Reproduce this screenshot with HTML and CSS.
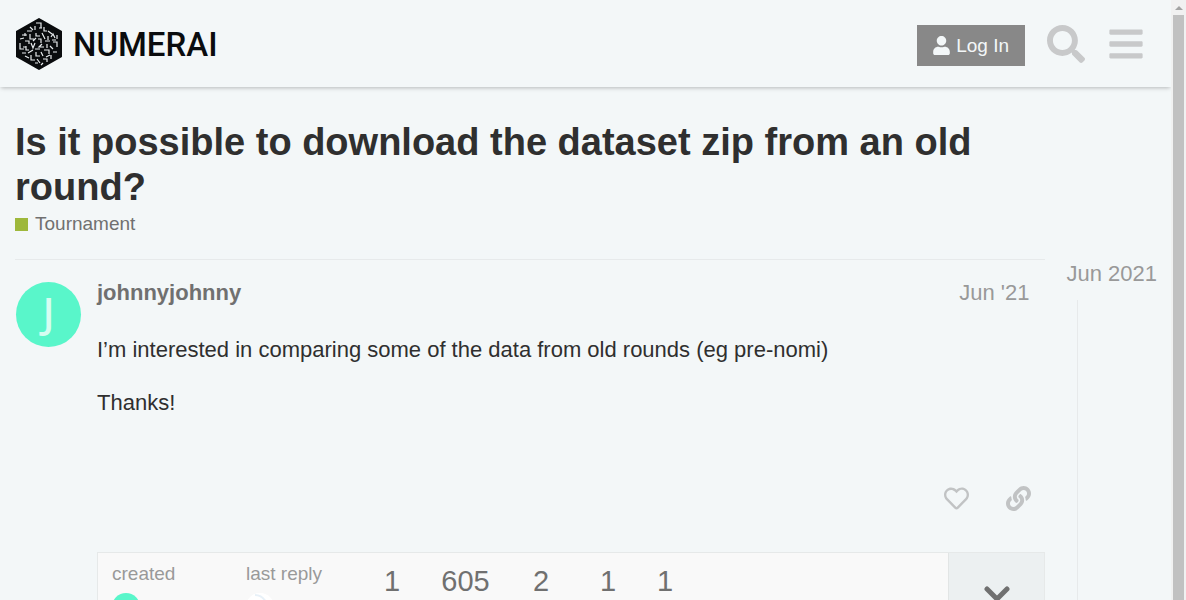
FILE: index.html
```html
<!DOCTYPE html>
<html lang="en">
<head>
<meta charset="utf-8">
<meta name="viewport" content="width=device-width, initial-scale=1">
<title>Is it possible to download the dataset zip from an old round?</title>
<link rel="stylesheet" href="styles.css">
</head>
<body>
<div class="window">
<div class="page">
  <header class="site-header">
    <a class="logo" href="#">
      <svg class="logo-mark" viewBox="0 0 46 52" aria-hidden="true">
        <path d="M23 1 45 13.500V38.500L23 51 1 38.500V13.500Z" fill="#0a0c0e" stroke="#0a0c0e" stroke-width="2" stroke-linejoin="round"/>
        <path d="M20 5h5v5M19 8v4M14 9l3 3M28 9v4h3M11 13h5M32 13l4 3M20 15v3h4M26 15l3 6M6 17h5M14 16v5h4M32 18v4M35 19l2-3 2 4M41 17v4M4 21l4-1M9 23h4v3M17 23l3-3M22 21h3v4M29 23h5M37 24h4v5M4 25v6h4M15 25l2 5 2-5M26 26l-3 3h5M31 26v4M34 28l3 3M10 28v4h3M19 31h5M28 32h5v4M37 34h4M6 35h4M12 35l5-3M20 34v4h4M25 34l2 4M15 37v5h4M9 38l4 2M30 39l4-2M27 41h4v3M21 41l3 4M19 45h3M35 37v4M25 47l2-2M23 10h3M9 15v3M36 22h4M7 29h3" fill="none" stroke="#e9edef" stroke-width="1.200"/>
      </svg>
      <span class="logo-name">NUMERAI</span>
    </a>
    <nav class="header-tools">
      <button class="login" type="button">
        <svg class="icon-user" viewBox="0 0 448 512" aria-hidden="true"><path d="M224 256c70.700 0 128-57.300 128-128S294.700 0 224 0 96 57.300 96 128s57.300 128 128 128zm89.600 32h-16.700c-22.200 10.200-46.900 16-72.900 16s-50.600-5.800-72.900-16h-16.700C60.200 288 0 348.200 0 422.400V464c0 26.500 21.500 48 48 48h352c26.500 0 48-21.500 48-48v-41.600c0-74.200-60.200-134.400-134.400-134.400z"/></svg>
        <span>Log In</span>
      </button>
      <button class="tool" type="button" aria-label="Search">
        <svg viewBox="0 0 512 512" aria-hidden="true"><path d="M505 442.700L405.300 343c-4.500-4.500-10.600-7-17-7H372c27.600-35.300 44-79.700 44-128C416 93.100 322.900 0 208 0S0 93.100 0 208s93.100 208 208 208c48.300 0 92.700-16.400 128-44v16.300c0 6.400 2.500 12.500 7 17l99.700 99.700c9.400 9.400 24.600 9.400 33.900 0l28.300-28.300c9.400-9.400 9.400-24.600.1-34zM208 336c-70.700 0-128-57.200-128-128 0-70.700 57.200-128 128-128 70.700 0 128 57.200 128 128 0 70.700-57.200 128-128 128z"/></svg>
      </button>
      <button class="tool" type="button" aria-label="Menu">
        <svg viewBox="-32 0 512 512" aria-hidden="true"><path d="M16 132h416c8.800 0 16-7.200 16-16V76c0-8.800-7.200-16-16-16H16C7.200 60 0 67.200 0 76v40c0 8.800 7.200 16 16 16zm0 160h416c8.800 0 16-7.200 16-16v-40c0-8.800-7.200-16-16-16H16c-8.800 0-16 7.200-16 16v40c0 8.800 7.200 16 16 16zm0 160h416c8.800 0 16-7.200 16-16v-40c0-8.800-7.200-16-16-16H16c-8.800 0-16 7.200-16 16v40c0 8.800 7.200 16 16 16z"/></svg>
      </button>
    </nav>
  </header>

  <main class="topic">
    <div class="topic-title">
      <h1>Is it possible to download the dataset zip from an old round?</h1>
      <a class="category" href="#"><span class="category-badge"></span>Tournament</a>
    </div>
    <div class="topic-body">
      <article class="post">
        <a class="avatar" href="#" aria-label="johnnyjohnny"><span>J</span></a>
        <div class="post-main">
          <div class="post-meta">
            <a class="username" href="#">johnnyjohnny</a>
            <a class="post-date" href="#">Jun '21</a>
          </div>
          <div class="post-text">
            <p>I’m interested in comparing some of the data from old rounds (eg pre-nomi)</p>
            <p>Thanks!</p>
          </div>
          <div class="post-actions">
            <button type="button" aria-label="Like"><svg viewBox="0 0 512 512" aria-hidden="true"><path d="M458.400 64.300C400.600 15.700 311.300 23 256 79.300 200.700 23 111.400 15.600 53.600 64.300-21.600 127.600-10.600 230.800 43 285.500l175.400 178.700c10 10.200 23.400 15.900 37.600 15.900 14.300 0 27.600-5.600 37.600-15.800L469 285.600c53.500-54.700 64.700-157.900-10.600-221.300zm-23.600 187.500L259.400 430.500c-2.400 2.400-4.400 2.400-6.800 0L77.200 251.800c-36.500-37.200-43.900-107.600 7.300-150.700 38.900-32.700 98.900-27.800 136.500 10.500l35 35.700 35-35.700c37.800-38.500 97.800-43.200 136.500-10.600 51.100 43.100 43.500 113.900 7.300 150.800z"/></svg></button>
            <button type="button" aria-label="Share a link to this post"><svg viewBox="0 0 512 512" aria-hidden="true"><path d="M326.612 185.391c59.747 59.809 58.927 155.698.36 214.590-.11.120-.24.250-.36.370l-67.200 67.200c-59.270 59.270-155.699 59.262-214.960 0-59.270-59.260-59.270-155.700 0-214.960l37.106-37.106c9.840-9.840 26.786-3.300 27.294 10.606.648 17.722 3.826 35.527 9.690 52.721 1.986 5.822.567 12.262-3.783 16.612l-13.087 13.087c-28.026 28.026-28.905 73.660-1.155 101.960 28.024 28.579 74.086 28.749 102.325.510l67.200-67.190c28.191-28.191 28.073-73.757 0-101.830-3.701-3.694-7.429-6.564-10.341-8.569a16.037 16.037 0 0 1-6.947-12.606c-.396-10.567 3.348-21.456 11.698-29.806l21.054-21.055c5.521-5.521 14.182-6.199 20.584-1.731a152.482 152.482 0 0 1 20.522 17.197zM467.547 44.449c-59.261-59.262-155.690-59.270-214.960 0l-67.200 67.200c-.120.120-.250.250-.360.370-58.566 58.892-59.387 154.781.360 214.590a152.454 152.454 0 0 0 20.521 17.196c6.402 4.468 15.064 3.789 20.584-1.731l21.054-21.055c8.350-8.350 12.094-19.239 11.698-29.806a16.037 16.037 0 0 0-6.947-12.606c-2.912-2.005-6.640-4.875-10.341-8.569-28.073-28.073-28.191-73.639 0-101.830l67.200-67.190c28.239-28.239 74.300-28.069 102.325.510 27.750 28.300 26.872 73.934-1.155 101.960l-13.087 13.087c-4.350 4.350-5.769 10.790-3.783 16.612 5.864 17.194 9.042 34.999 9.690 52.721.509 13.906 17.454 20.446 27.294 10.606l37.106-37.106c59.271-59.259 59.271-155.699.001-214.959z"/></svg></button>
          </div>
          <section class="topic-map">
            <div class="map-people">
              <div class="map-person"><span>created</span><div><i class="mini-avatar"></i></div></div>
              <div class="map-person"><span>last reply</span><div><svg class="mini-avatar mini-photo" viewBox="0 0 28 28" aria-hidden="true"><circle cx="14" cy="14" r="14" fill="#fff"/><path d="M9 2q7 0 11 7" fill="none" stroke="#e8f1f8" stroke-width="2"/></svg>Feb '22</div></div>
            </div>
            <div class="map-counts"><span>1</span><span>605</span><span>2</span><span>1</span><span>1</span></div>
            <button class="map-toggle" type="button" aria-label="Show topic details"><svg viewBox="0 0 26 16" aria-hidden="true"><path d="M3 3l10 10L23 3" fill="none" stroke="#707070" stroke-width="5" stroke-linecap="round" stroke-linejoin="miter"/></svg></button>
          </section>
        </div>
      </article>
      <aside class="timeline">
        <a href="#">Jun 2021</a>
        <div class="timeline-track"></div>
      </aside>
    </div>
  </main>
</div>
<div class="scrollbar" aria-hidden="true"><span class="scroll-arrow"></span><span class="scroll-thumb"></span></div>
</div>
</body>
</html>
```
FILE: styles.css
```css
* { box-sizing: border-box; }
body {
  margin: 0;
  background: #f3f7f8;
  color: #2f2f2f;
  font: 22px/31px "Liberation Sans", Arial, sans-serif;
}
a { color: inherit; text-decoration: none; }
button { margin: 0; padding: 0; border: 0; background: none; font: inherit; cursor: pointer; }
svg { display: block; fill: currentColor; }

.window { display: flex; height: 100vh; overflow: hidden; }
.page { flex: 1; min-width: 0; overflow: hidden; }

.site-header {
  display: flex;
  align-items: center;
  justify-content: space-between;
  height: 87px;
  padding: 0 26px 0 16px;
  box-shadow: 0 2px 4px -1px rgba(0, 0, 0, .25);
}
.logo { display: flex; align-items: center; gap: 11px; color: #0a0c0e; }
.logo-mark { width: 46px; height: 52px; }
.logo-name { padding-top: 3px; font: 500 33px/52px Roboto, sans-serif; }
.header-tools { display: flex; align-items: center; gap: 22px; color: #c8c9ca; }
.login {
  display: flex;
  align-items: center;
  gap: 6px;
  height: 41px;
  margin-top: 4px;
  padding: 0 16px;
  background: #888;
  color: #f3f7f8;
  font-size: 19px;
}
.icon-user { width: 17px; height: 19px; }
.tool { color: inherit; }
.tool svg { width: 38px; height: 38px; }

.topic { padding: 33px 14px 0 15px; }
.topic-title { max-width: 1030px; padding-bottom: 21px; }
h1 { margin: 0; font-size: 38px; line-height: 45px; }
.category {
  display: flex;
  align-items: center;
  gap: 7px;
  color: #707070;
  font-size: 19px;
  line-height: 28px;
}
.category-badge { width: 13px; height: 13px; background: #9eb83b; }

.topic-body { display: flex; gap: 21px; }
.post {
  display: flex;
  flex: 1;
  gap: 16px;
  min-width: 0;
  border-top: 1px solid #e7eaeb;
}
.avatar {
  display: flex;
  flex: none;
  justify-content: center;
  width: 65px;
  height: 65px;
  margin: 22px 0 0 1px;
  border-radius: 50%;
  background: #59f6ca;
  color: #d5fdf1;
  font: 500 42px/59px "Noto Sans", sans-serif;
}
.post-main { flex: 1; min-width: 0; padding-top: 17px; }
.post-meta { display: flex; justify-content: space-between; padding-right: 16px; }
.username { color: #707070; font-weight: bold; }
.post-date { color: #999; }
.post-text { padding-top: 26px; }
.post-text p { margin: 0 0 22px; }
.post-actions {
  display: flex;
  justify-content: flex-end;
  gap: 37px;
  padding: 46px 14px 41px;
  color: #c1c3c4;
}
.post-actions button { color: inherit; }
.post-actions svg { width: 25px; height: 25px; }

.topic-map {
  display: flex;
  height: 90px;
  border: 1px solid #e6e9e9;
  background: #f9f9f9;
  color: #999;
  font-size: 19px;
  line-height: 24px;
}
.map-people { display: flex; gap: 20px; padding: 9px 0 0 14px; }
.map-person { width: 114px; }
.map-person div { display: flex; align-items: center; gap: 6px; padding-top: 7px; color: #707070; }
.mini-avatar { width: 28px; height: 28px; border-radius: 50%; background: #59f6ca; }
.mini-photo { background: #fff; }
.map-counts {
  display: grid;
  flex: 1;
  grid-template-columns: 58px 49px 62px 32px 42px;
  gap: 20px;
  padding: 12px 0 0 3px;
  color: #707070;
  font-size: 29px;
  line-height: 33px;
  text-align: center;
}
.map-toggle {
  display: flex;
  justify-content: center;
  width: 96px;
  padding-top: 33px;
  border-left: 1px solid #e2e5e5;
  background: #ecf0f1;
}
.map-toggle svg { width: 26px; height: 16px; }

.timeline { display: flex; flex-direction: column; color: #999; }
.timeline a { line-height: 29px; }
.timeline-track { flex: 1; margin: 12px 0 0 11px; border-left: 1px solid #e7eaeb; }

.scrollbar {
  display: flex;
  flex: none;
  flex-direction: column;
  align-items: center;
  width: 15px;
  background: #f1f1f1;
}
.scroll-arrow {
  margin: 6px 0 5px;
  border: 4px solid transparent;
  border-top: 0;
  border-bottom-color: #a3a3a3;
}
.scroll-thumb { flex: 1; width: 11px; background: #c1c1c1; }
```
